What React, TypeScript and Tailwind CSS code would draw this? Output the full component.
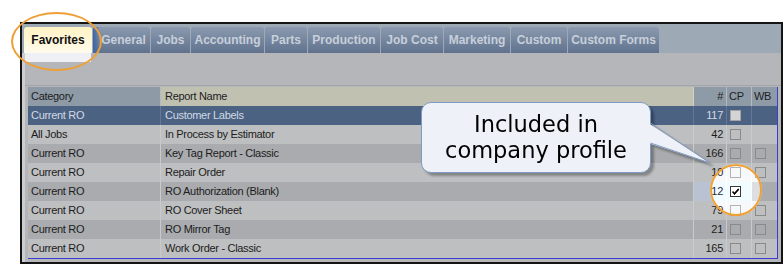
import React from 'react'

type Row = {
  category: string
  report: string
  count: number
  cp: 'empty' | 'filled' | 'checked'
  wb: boolean
}

const rows: Row[] = [
  { category: 'Current RO', report: 'Customer Labels', count: 117, cp: 'filled', wb: false },
  { category: 'All Jobs', report: 'In Process by Estimator', count: 42, cp: 'empty', wb: false },
  { category: 'Current RO', report: 'Key Tag Report - Classic', count: 166, cp: 'empty', wb: true },
  { category: 'Current RO', report: 'Repair Order', count: 10, cp: 'empty', wb: true },
  { category: 'Current RO', report: 'RO Authorization (Blank)', count: 12, cp: 'checked', wb: false },
  { category: 'Current RO', report: 'RO Cover Sheet', count: 79, cp: 'empty', wb: true },
  { category: 'Current RO', report: 'RO Mirror Tag', count: 21, cp: 'empty', wb: true },
  { category: 'Current RO', report: 'Work Order - Classic', count: 165, cp: 'empty', wb: true }
]

const tabs = [
  { label: 'General', w: 'w-[57px]' },
  { label: 'Jobs', w: 'w-[39px]' },
  { label: 'Accounting', w: 'w-[73px]' },
  { label: 'Parts', w: 'w-[42px]' },
  { label: 'Production', w: 'w-[72px]' },
  { label: 'Job Cost', w: 'w-[62px]' },
  { label: 'Marketing', w: 'w-[66px]' },
  { label: 'Custom', w: 'w-[56px]' },
  { label: 'Custom Forms', w: 'w-[91px]' }
]

const Checkbox = ({ state }: { state: Row['cp'] }) => {
  if (state === 'checked') {
    return (
      <span className="flex h-[11px] w-[11px] items-center justify-center border border-[#2a2a2a] bg-[#eef1f6]">
        <svg width="9" height="9" viewBox="0 0 9 9">
          <path d="M1.5 4.5 L3.5 6.8 L7.8 1.8" fill="none" stroke="#000" strokeWidth="1.8" />
        </svg>
      </span>
    )
  }
  return (
    <span
      className={
        state === 'filled'
          ? 'block h-[11px] w-[11px] border border-[#a4a4a4] bg-[#d4d4d4]'
          : 'block h-[11px] w-[11px] border border-[#8a8a8a]'
      }
    />
  )
}

const GridRow = ({ row, index }: { row: Row; index: number }) => {
  const selected = index === 0
  const bg = selected ? 'bg-[#4b6283]' : index % 2 === 1 ? 'bg-[#bebfc0]' : 'bg-[#a9abae]'
  const text = selected ? 'text-[#d2dae4]' : 'text-[#1c1c1c]'
  const sep = selected ? 'border-r border-[#62779a]' : 'border-r border-[#c9cacc]'
  const hot = row.cp === 'checked' ? 'bg-[#b9c2d2]' : ''

  return (
    <div className={`flex h-[19px] ${bg} ${text}`}>
      <div className={`flex w-[133px] items-center pl-[3px] ${sep}`}>{row.category}</div>
      <div className={`flex w-[533px] items-center pl-[4px] ${sep}`}>{row.report}</div>
      <div className={`flex w-[33px] items-center justify-end pr-[3px] ${sep} ${hot}`}>
        {row.count}
      </div>
      <div className={`flex w-[25px] items-center pl-[3px] ${sep} ${hot}`}>
        <Checkbox state={row.cp} />
      </div>
      <div className="flex w-[25px] items-center pl-[3px]">
        {row.wb && <Checkbox state="empty" />}
      </div>
    </div>
  )
}

export default function App() {
  return (
    <div className="relative h-[264px] w-[783px] overflow-hidden bg-white pt-[22px] pl-[20px] font-['Liberation_Sans',Arial,sans-serif]">
      <div className="flex h-[242px] w-[763px] flex-col border-2 border-[#141414]">
        {/* tab strip */}
        <div className="flex h-[29px] items-end gap-px bg-[#9ea9b6] pl-[2px]">
          <div className="flex h-[26px] w-[68px] items-center justify-center rounded-t-[3px] bg-gradient-to-b from-[#fff2c4] to-[#fffbea] text-[12px] font-bold text-[#111]">
            Favorites
          </div>
          {tabs.map((t, i) => (
            <div
              key={t.label}
              className={`relative flex h-[26px] ${t.w} items-center justify-center overflow-hidden rounded-t-[3px] bg-gradient-to-b from-[#8b9aaf] to-[#60728e] text-[12px] font-bold text-[#c7cfda]`}
            >
              {i === 0 && (
                <span className="absolute top-0 left-0 h-full w-[7px] bg-gradient-to-r from-[#3b65a8] to-transparent" />
              )}
              <span className={i === 0 ? 'pl-[4px]' : ''}>{t.label}</span>
            </div>
          ))}
        </div>

        {/* panel */}
        <div className="flex flex-1 flex-col border-l-[3px] border-[#cccdcf] bg-[#b5b6b9]">
          <div className="h-[9px] w-[66px] bg-[#eef0f5]" />
          <div className="mt-[23px] h-px bg-[#a3a5a9]" />
          <div className="mt-px ml-[3px] w-[750px] border-r border-b border-[#3c3cd2] text-[11px] tracking-[-0.3px]">
            <div className="flex h-[19px] text-[#1e1e1e]">
              <div className="flex w-[133px] items-center border-r border-[#b3bac2] bg-[#8e9aa6] pl-[3px]">
                Category
              </div>
              <div className="flex w-[533px] items-center border-r border-[#d2d3c8] bg-[#c0c1b1] pl-[4px]">
                Report Name
              </div>
              <div className="flex w-[33px] items-center justify-end border-r border-[#b3bac2] bg-[#8e9aa6] pr-[3px]">
                #
              </div>
              <div className="flex w-[25px] items-center border-r border-[#b3bac2] bg-[#8e9aa6] pl-[2px]">
                CP
              </div>
              <div className="flex w-[25px] items-center bg-[#8e9aa6] pl-[2px]">WB</div>
            </div>
            {rows.map((r, i) => (
              <GridRow key={r.report} row={r} index={i} />
            ))}
          </div>
        </div>
      </div>

      {/* highlight ring round the Favorites tab */}
      <div className="absolute top-[12px] left-[11px] h-[59px] w-[91px] rounded-[50%] border-2 border-[#eea037]" />

      {/* magnifier ring on the checked CP box */}
      <div className="absolute top-[164px] left-[710px] h-[52px] w-[52px] rounded-full border-2 border-[#f0a035] backdrop-brightness-[1.3]" />

      {/* callout */}
      <div className="absolute top-[102px] left-[421px] drop-shadow-[3px_3px_1px_rgba(0,0,0,0.3)]">
        <div className="h-[71px] w-[230px] rounded-[10px] border border-[#7f9bc3] bg-[#eef2f8] pt-[8px] text-center font-['DejaVu_Sans',Verdana,sans-serif] text-[22.5px] leading-[26px] text-black">
          Included in
          <br />
          company profile
        </div>
        <svg
          className="absolute top-[18px] left-[224px]"
          width="70"
          height="48"
          viewBox="0 0 70 48"
        >
          <polygon points="3,3 65,43 3,23" fill="#eef2f8" />
          <polyline points="5.5,3 65,43 5.5,23" fill="none" stroke="#7f9bc3" strokeWidth="1" />
        </svg>
      </div>
    </div>
  )
}
